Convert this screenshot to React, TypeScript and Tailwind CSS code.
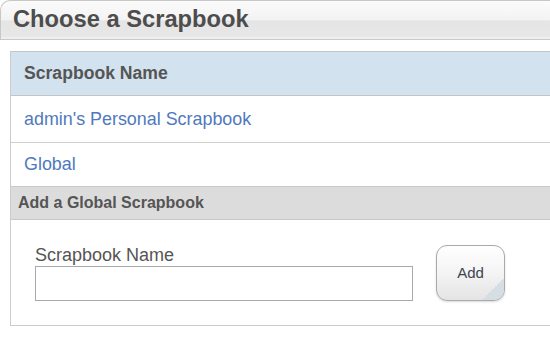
import React from "react";

export default function App() {
  const font = { fontFamily: '"Liberation Sans", Arial, sans-serif' };
  return (
    <div className="w-[550px] h-[358px] bg-white overflow-hidden" style={font}>
      <div className="h-[40px] w-[560px] border-l border-t border-b border-[#c8c8c8] rounded-tl-[10px] bg-[linear-gradient(to_bottom,#fbfbfb_0%,#f3f3f3_50%,#e5e5e5_52%,#e7e7e7_92%,#f2f2f2_100%)] pl-[12px] pt-[6px]">
        <div className="text-[23.7px] leading-[24px] font-bold text-[#4d4d4d]">Choose a Scrapbook</div>
      </div>
      <div className="mt-[11px] ml-[10px] w-[560px] border-l border-b border-[#cccccc]">
        <div className="h-[45px] bg-[#d3e2ef] border-t border-b border-[#c4c4c4] flex items-center pl-[13px]">
          <span className="text-[17.6px] font-bold text-[#555555]">Scrapbook Name</span>
        </div>
        <div className="h-[47px] border-b border-[#cfcfcf] flex items-center pl-[13px]">
          <a className="text-[17.9px] text-[#5079bd]">admin's Personal Scrapbook</a>
        </div>
        <div className="h-[44px] border-b border-[#c8c8c8] flex items-center pl-[13px]">
          <a className="text-[17.9px] text-[#5079bd]">Global</a>
        </div>
        <div className="h-[33px] bg-[#dcdcdc] border-b border-[#c8c8c8] flex items-center pl-[7px]">
          <span className="text-[16px] font-bold text-[#555555]">Add a Global Scrapbook</span>
        </div>
        <div className="h-[105px] flex items-start pt-[24px] pl-[24px]">
          <div className="flex flex-col">
            <label className="h-[22px] leading-[22px] text-[18px] text-[#555555]">Scrapbook Name</label>
            <input className="w-[378px] h-[35px] border border-[#a9a9a9] bg-white outline-none" />
          </div>
          <button className="relative overflow-hidden ml-[23px] mt-[1px] w-[69px] h-[56px] rounded-[11px] border border-[#aaaaaa] bg-[linear-gradient(to_bottom,#ffffff_0%,#f4f4f4_50%,#e4e4e4_100%)] shadow-[0_1px_2px_rgba(0,0,0,0.15)] text-[15px] text-[#3d4450]">
            <span className="absolute right-0 bottom-0 w-[22px] h-[22px] bg-[linear-gradient(135deg,transparent_50%,#d5dfe3_50%)]"></span>
            <span className="relative">Add</span>
          </button>
        </div>
      </div>
    </div>
  );
}
